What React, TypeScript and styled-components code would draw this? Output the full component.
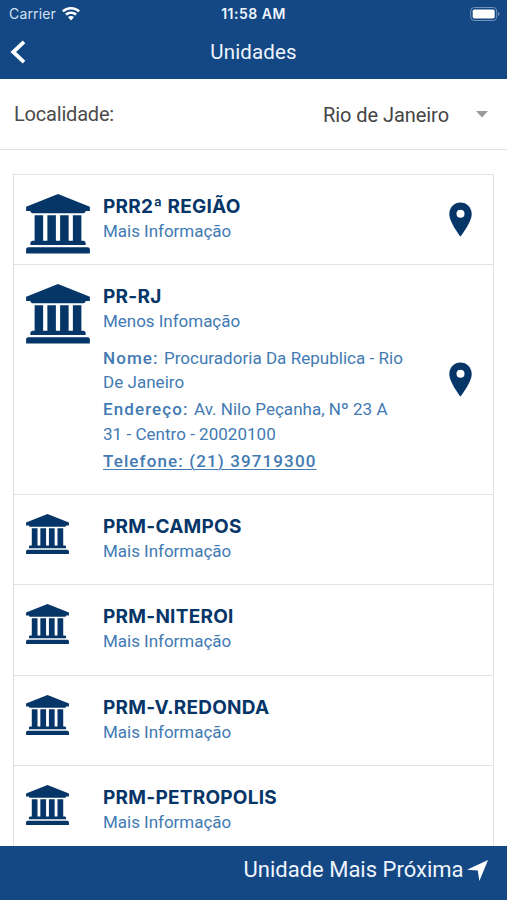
import React from "react";
import styled, { createGlobalStyle } from "styled-components";

const GlobalStyle = createGlobalStyle`
  * { box-sizing: border-box; }
  body { margin: 0; background: #fff; font-family: Roboto, sans-serif; overflow: hidden; }
`;

const Screen = styled.div`
  display: flex;
  flex-direction: column;
  width: 507px;
  height: 900px;
  overflow: hidden;
  background: #fff;
`;

const Header = styled.header`
  flex: none;
  height: 79px;
  background: #144885;
  color: #eef4fc;
`;

const StatusBar = styled.div`
  display: grid;
  grid-template-columns: 1fr auto 1fr;
  align-items: center;
  height: 28px;
  padding: 0 9px;
  font: 14px/28px Inter, sans-serif;
  svg { display: block; }
`;

const Carrier = styled.div`
  display: flex;
  align-items: center;
  gap: 6px;
  letter-spacing: 0.15px;
  color: #d5e2f4;
`;

const Clock = styled.div`
  font-size: 14px;
  font-weight: 600;
  letter-spacing: 0.5px;
`;

const Battery = styled.div`
  display: flex;
  justify-content: flex-end;
  margin-right: -2px;
`;

const NavBar = styled.div`
  display: grid;
  grid-template-columns: 40px 1fr 40px;
  align-items: center;
  height: 48px;
`;

const BackButton = styled.button`
  border: 0;
  padding: 0 0 0 9px;
  background: none;
  display: flex;
`;

const PageTitle = styled.h1`
  margin: 0;
  text-align: center;
  font-size: 20.5px;
  font-weight: 400;
  line-height: 47px;
  letter-spacing: 0.15px;
`;

const Locality = styled.div`
  flex: none;
  display: flex;
  align-items: center;
  height: 71px;
  padding: 0 19px 0 14px;
  border-bottom: 1px solid #e0e0e0;
  color: #4b4b4b;
  font-size: 20px;
`;

const LocalityLabel = styled.span`
  flex: 1;
  padding-bottom: 1px;
  letter-spacing: -0.2px;
`;

const LocalityValue = styled.span`
  margin-right: 27px;
  padding-top: 1px;
  letter-spacing: -0.05px;
  color: #444;
`;

const List = styled.main`
  flex: 1;
  min-height: 0;
  overflow: hidden;
  padding: 24px 13px 0;
`;

const Card = styled.div`
  border: 1px solid #e2e2e2;
`;

const Row = styled.section<{ $height: number }>`
  display: grid;
  grid-template-columns: 89px 306px 1fr;
  height: ${(p) => p.$height}px;
  & + & { border-top: 1px solid #e2e2e2; }
`;

const IconCell = styled.div`
  padding: 19px 0 0 12px;
`;

const Info = styled.div`
  padding-top: 19px;
  color: #427ab3;
  font-size: 17px;
`;

const Name = styled.h2`
  margin: 0;
  color: #063568;
  font: 700 19px/25px Inter, sans-serif;
  letter-spacing: 0.25px;
  white-space: nowrap;
`;

const Toggle = styled.div`
  line-height: 25px;
  letter-spacing: -0.03px;
`;

const Details = styled.div`
  padding-top: 11.5px;
`;

const Detail = styled.p`
  margin: 0 0 2.4px;
  line-height: 24.6px;
  letter-spacing: 0.03px;
  white-space: nowrap;
`;

const Label = styled.b`
  font-weight: 500;
  letter-spacing: 1.1px;
`;

const Phone = styled.a`
  font-weight: 500;
  letter-spacing: 1.12px;
  text-decoration: underline;
  text-decoration-thickness: 1px;
  text-underline-offset: 2px;
`;

const PinCell = styled.div`
  display: flex;
  align-items: center;
  padding-left: 40px;
`;

const Footer = styled.footer`
  flex: none;
  display: flex;
  align-items: center;
  justify-content: flex-end;
  gap: 3px;
  height: 54px;
  padding: 0 19.5px 8px 0;
  background: #144885;
  color: #eef4fc;
  font-size: 22px;
`;

const ArrowBox = styled.span`
  display: flex;
  padding-top: 3px;
`;

const BankIcon = ({ large }: { large?: boolean }) => (
  <svg width={large ? 64 : 43} height={large ? 59.5 : 40} viewBox="0 0 1920 1792" fill="#063568">
    <path d="M960 0l960 384v128h-128q0 26-20.500 45t-48.500 19h-1526q-28 0-48.500-19t-20.500-45h-128v-128zM256 640h256v768h128v-768h256v768h128v-768h256v768h128v-768h256v768h59q28 0 48.500 19t20.500 45v64h-1664v-64q0-26 20.500-45t48.500-19h59v-768zM1851 1600q28 0 48.500 19t20.500 45v128h-1920v-128q0-26 20.500-45t48.500-19h1782z" />
  </svg>
);

const PinIcon = () => (
  <svg width="23" height="35" viewBox="0 0 23 35" fill="#063568">
    <path fillRule="evenodd" d="M11.500 0.500C5.200 0.500 0.300 5.400 0.300 12C0.300 20.500 11.500 34.500 11.500 34.500S22.700 20.500 22.700 12C22.700 5.400 17.800 0.500 11.500 0.500ZM11.500 7.800A4 4 0 1 1 11.500 15.800A4 4 0 1 1 11.500 7.800Z" />
  </svg>
);

interface Unit {
  name: string;
  height: number;
  large?: boolean;
  pin?: boolean;
  open?: boolean;
}

const units: Unit[] = [
  { name: "PRR2ª REGIÃO", height: 89.2, large: true, pin: true },
  { name: "PR-RJ", height: 229.6, large: true, pin: true, open: true },
  { name: "PRM-CAMPOS", height: 90.4 },
  { name: "PRM-NITEROI", height: 90.4 },
  { name: "PRM-V.REDONDA", height: 90.4 },
  { name: "PRM-PETROPOLIS", height: 90.4 },
];

export default function App() {
  return (
    <Screen>
      <GlobalStyle />
      <Header>
        <StatusBar>
          <Carrier>
            Carrier
            <svg width="18" height="14" viewBox="0 0 18 14" fill="#fff">
              <path d="M9 0C5.500 0 2.300 1.400 0 3.600L1.700 5.300C3.600 3.500 6.200 2.400 9 2.400S14.400 3.500 16.300 5.300L18 3.600C15.700 1.400 12.500 0 9 0Z" />
              <path d="M9 4.500C6.700 4.500 4.600 5.300 3.100 6.700L4.800 8.400C5.900 7.500 7.400 6.900 9 6.900S12.100 7.500 13.200 8.400L14.900 6.700C13.400 5.300 11.300 4.500 9 4.500Z" />
              <path d="M9 9C7.800 9 6.800 9.400 6 10.100L9 13.400L12 10.100C11.200 9.400 10.200 9 9 9Z" />
            </svg>
          </Carrier>
          <Clock>11:58 AM</Clock>
          <Battery>
            <svg width="30" height="14" viewBox="0 0 30 14">
              <rect x="0.700" y="0.500" width="26" height="13" rx="3.500" fill="none" stroke="#7392b8" />
              <rect x="2.700" y="2.500" width="22" height="9" rx="1.700" fill="#fff" />
              <path d="M28 5V9C29.200 8.500 29.600 7.800 29.600 7S29.200 5.500 28 5Z" fill="#7392b8" />
            </svg>
          </Battery>
        </StatusBar>
        <NavBar>
          <BackButton aria-label="Voltar">
            <svg width="17" height="24" viewBox="0 0 17 24">
              <path d="M15 1.800L4.200 12L15 22.200" fill="none" stroke="#fff" strokeWidth="3.800" />
            </svg>
          </BackButton>
          <PageTitle>Unidades</PageTitle>
        </NavBar>
      </Header>
      <Locality>
        <LocalityLabel>Localidade:</LocalityLabel>
        <LocalityValue>Rio de Janeiro</LocalityValue>
        <svg width="12" height="7" viewBox="0 0 12 7" fill="#999">
          <path d="M0 0H12L6 6.500Z" />
        </svg>
      </Locality>
      <List>
        <Card>
          {units.map((u) => (
            <Row key={u.name} $height={u.height}>
              <IconCell>
                <BankIcon large={u.large} />
              </IconCell>
              <Info>
                <Name>{u.name}</Name>
                <Toggle>{u.open ? "Menos Infomação" : "Mais Informação"}</Toggle>
                {u.open && (
                  <Details>
                    <Detail>
                      <Label>Nome: </Label>Procuradoria Da Republica - Rio
                      <br />
                      De Janeiro
                    </Detail>
                    <Detail>
                      <Label>Endereço: </Label>Av. Nilo Peçanha, Nº 23 A
                      <br />
                      31 - Centro - 20020100
                    </Detail>
                    <Detail>
                      <Phone>Telefone: (21) 39719300</Phone>
                    </Detail>
                  </Details>
                )}
              </Info>
              <PinCell>{u.pin && <PinIcon />}</PinCell>
            </Row>
          ))}
        </Card>
      </List>
      <Footer>
        Unidade Mais Próxima
        <ArrowBox>
          <svg width="21" height="21" viewBox="0 0 20 20" fill="#fff">
            <path d="M20 0L0 9.300L10.300 10L11.800 20Z" />
          </svg>
        </ArrowBox>
      </Footer>
    </Screen>
  );
}
